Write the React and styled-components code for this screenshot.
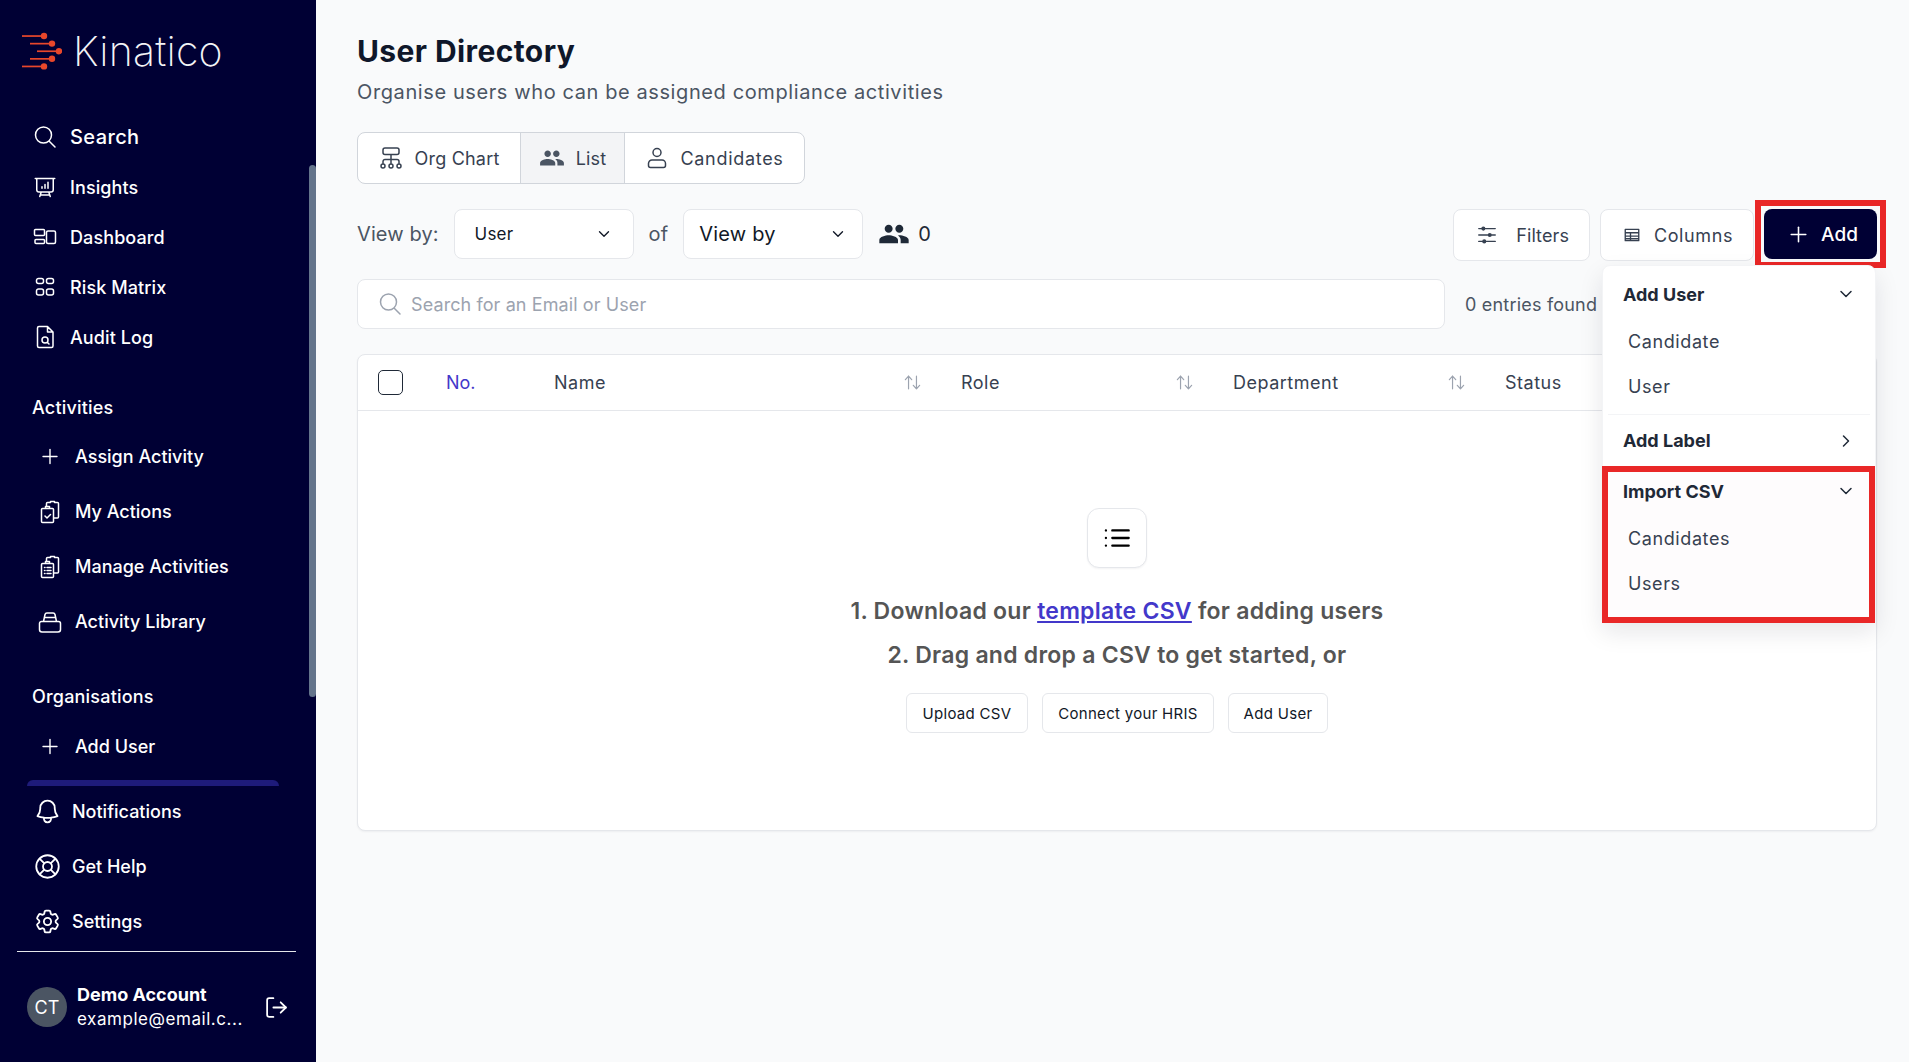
import React from 'react';
import styled, { createGlobalStyle } from 'styled-components';
import { HiOutlinePresentationChartBar, HiOutlineBell, HiOutlineCog6Tooth } from 'react-icons/hi2';
import { MdPeople } from 'react-icons/md';
import { ChevronDown, ChevronRight, LifeBuoy, LogOut, Plus } from 'lucide-react';

const GlobalStyle = createGlobalStyle`
  html, body {
    margin: 0;
    padding: 0;
    height: 100%;
    background: #f9fafb;
    font-family: Inter, "Open Sans", sans-serif;
  }
  * {
    box-sizing: border-box;
  }
`;

const Page = styled.div`
  display: flex;
  width: 100%;
  height: 100vh;
  overflow: hidden;
`;

const Sidebar = styled.aside`
  display: flex;
  flex-direction: column;
  flex: 0 0 316px;
  height: 100%;
  background: #000034;
  color: #fff;
`;

const LogoBar = styled.div`
  display: flex;
  align-items: center;
  gap: 11px;
  flex: 0 0 112px;
  padding: 0 0 11px 22px;
`;

const LogoText = styled.span`
  font-size: 41px;
  font-weight: 200;
  letter-spacing: 0.2px;
  color: #f3f4f6;
`;

const NavScroll = styled.nav`
  position: relative;
  flex: 1;
  overflow: hidden;
`;

const ScrollThumb = styled.div`
  position: absolute;
  top: 53px;
  right: 0;
  width: 7px;
  height: 532px;
  border-radius: 4px;
  background: #64748b;
`;

const TopRow = styled.div`
  display: flex;
  align-items: center;
  height: 50px;
  padding-left: 33px;
  gap: 13px;
  font-size: ${(p) => (p.$large ? '20px' : '18px')};
  font-weight: 500;
  letter-spacing: ${(p) => (p.$large ? '0.4px' : '0.1px')};
`;

const IconSlot = styled.span`
  display: flex;
  align-items: center;
  justify-content: center;
  flex: 0 0 ${(p) => p.$size || 24}px;
  min-width: 0;
  height: 24px;
`;

const SectionTitle = styled.div`
  display: flex;
  align-items: center;
  height: ${(p) => p.$height}px;
  margin-top: ${(p) => p.$top}px;
  padding-left: 32px;
  font-size: 18px;
  font-weight: 500;
  letter-spacing: 0.2px;
`;

const SubRow = styled.div`
  display: flex;
  align-items: center;
  height: 55px;
  padding-left: 38px;
  gap: 13px;
  font-size: 18px;
  font-weight: 500;
`;

const BottomNav = styled.div`
  display: flex;
  flex-direction: column;
  gap: 10px;
  padding-top: 3px;
`;

const ScrollEdge = styled.div`
  flex: 0 0 6px;
  margin: 0 37px 0 27px;
  border-radius: 8px 8px 0 0;
  background: #1e1b7a;
`;

const BottomRow = styled.div`
  display: flex;
  align-items: center;
  height: 45px;
  padding-left: 33px;
  gap: 10px;
  font-size: 18px;
  font-weight: 500;
`;

const Divider = styled.hr`
  flex: 0 0 1px;
  width: 279px;
  margin: 7px 0 0 17px;
  border: 0;
  background: #e5e7eb;
`;

const Account = styled.div`
  display: flex;
  align-items: center;
  flex: 0 0 110px;
  padding-left: 27px;
`;

const Avatar = styled.div`
  display: flex;
  align-items: center;
  justify-content: center;
  flex: 0 0 40px;
  height: 40px;
  border-radius: 50%;
  background: #4b5563;
  font-size: 18px;
`;

const AccountText = styled.div`
  display: flex;
  flex-direction: column;
  gap: 4px;
  width: 197px;
  padding-left: 10px;
  margin-top: -2px;
`;

const AccountName = styled.span`
  font-size: 18px;
  font-weight: 700;
`;

const AccountMail = styled.span`
  font-size: 17px;
  letter-spacing: 0.55px;
`;

const Main = styled.main`
  flex: 1;
  min-width: 0;
  padding: 31px 32px 0 41px;
`;

const Title = styled.h1`
  margin: 0;
  font-size: 30px;
  line-height: 40px;
  font-weight: 700;
  letter-spacing: 0.4px;
  color: #0f172a;
`;

const Subtitle = styled.p`
  margin: 7px 0 0;
  font-size: 20px;
  line-height: 28px;
  color: #4b5563;
  letter-spacing: 0.6px;
`;

const Tabs = styled.div`
  display: inline-flex;
  height: 52px;
  margin-top: 26px;
  border: 1px solid #d1d5db;
  border-radius: 8px;
  background: #fff;
  overflow: hidden;
`;

const Tab = styled.div`
  display: flex;
  align-items: center;
  justify-content: center;
  gap: ${(p) => p.$gap || 11}px;
  width: ${(p) => p.$width}px;
  font-size: 18px;
  letter-spacing: ${(p) => p.$spacing || 0.2}px;
  color: #374151;
  background: ${(p) => (p.$active ? '#f3f4f6' : 'transparent')};
  & + & {
    border-left: 1px solid #d1d5db;
  }
`;

const ToolRow = styled.div`
  display: flex;
  align-items: flex-start;
  margin-top: 25px;
`;

const ViewGroup = styled.div`
  display: flex;
  align-items: center;
  height: 50px;
  flex: 1;
`;

const ViewLabel = styled.span`
  font-size: 20px;
  letter-spacing: 0.1px;
  color: #4b5563;
  margin: ${(p) => p.$margin};
`;

const Select = styled.div`
  display: flex;
  align-items: center;
  justify-content: space-between;
  width: 180px;
  height: 50px;
  padding: 0 ${(p) => p.$right}px 0 ${(p) => p.$pad}px;
  border: 1px solid #e5e7eb;
  border-radius: 8px;
  background: #fff;
  color: #111827;
  font-size: ${(p) => p.$size}px;
  letter-spacing: 0.2px;
`;

const Count = styled.div`
  display: flex;
  align-items: center;
  gap: 8px;
  margin-left: 15px;
  font-size: 20px;
  color: #1f2937;
`;

const ToolButton = styled.div`
  display: flex;
  align-items: center;
  justify-content: flex-end;
  width: ${(p) => p.$width}px;
  height: 52px;
  margin-right: 10px;
  padding-right: 20px;
  gap: ${(p) => p.$gap}px;
  border: 1px solid #e5e7eb;
  border-radius: 8px;
  background: #fff;
  font-size: 18px;
  letter-spacing: ${(p) => p.$spacing}px;
  color: #374151;
`;

const AddWrap = styled.div`
  position: relative;
  width: 113px;
  height: 50px;
`;

const AddButton = styled.div`
  display: flex;
  align-items: center;
  justify-content: center;
  gap: 10px;
  height: 100%;
  padding-left: 3px;
  border-radius: 8px;
  background: #000034;
  color: #fff;
  font-size: 19px;
  font-weight: 500;
`;

const Highlight = styled.div`
  position: absolute;
  top: ${(p) => p.$inset[0]}px;
  right: ${(p) => p.$inset[1]}px;
  bottom: ${(p) => p.$inset[2]}px;
  left: ${(p) => p.$inset[3]}px;
  border: 6px solid #e92727;
  pointer-events: none;
`;

const Menu = styled.div`
  position: absolute;
  top: 56px;
  right: 1px;
  z-index: 5;
  width: 274px;
  height: 357px;
  padding-top: 3px;
  background: #fff;
  border: 1px solid #f3f4f6;
  border-radius: 8px 8px 0 0;
  box-shadow: 0 10px 24px rgba(15, 23, 42, 0.1);
`;

const MenuHead = styled.div`
  display: flex;
  align-items: center;
  justify-content: space-between;
  height: ${(p) => p.$height}px;
  padding: 0 19px 0 20px;
  font-size: 18px;
  font-weight: 700;
  color: #1f2937;
`;

const MenuItem = styled.div`
  display: flex;
  align-items: center;
  height: 45px;
  padding-left: 25px;
  font-size: 18px;
  letter-spacing: 0.6px;
  color: #374151;
`;

const MenuLine = styled.div`
  height: 1px;
  margin: 5px 5px 0;
  background: #f3f4f6;
`;

const ImportSection = styled.div`
  position: relative;
  height: 157px;
  background: #fefcfd;
`;

const SearchRow = styled.div`
  display: flex;
  align-items: center;
  margin-top: 18px;
`;

const SearchBox = styled.div`
  display: flex;
  align-items: center;
  flex: 1;
  height: 50px;
  padding-left: 20px;
  gap: 9px;
  border: 1px solid #e5e7eb;
  border-radius: 8px;
  background: #fff;
  font-size: 18px;
  letter-spacing: 0.1px;
  color: #9ca3af;
`;

const Entries = styled.div`
  flex: 0 0 432px;
  padding-left: 20px;
  font-size: 18px;
  letter-spacing: 0.2px;
  color: #4b5563;
`;

const Card = styled.section`
  margin-top: 25px;
  height: 477px;
  border: 1px solid #e5e7eb;
  border-radius: 8px;
  background: #fff;
  box-shadow: 0 1px 2px rgba(15, 23, 42, 0.05);
`;

const HeaderRow = styled.div`
  display: grid;
  grid-template-columns: 68px 108px 407px 272px 272px 1fr;
  align-items: center;
  height: 56px;
  padding-left: 20px;
  border-bottom: 1px solid #e5e7eb;
`;

const Checkbox = styled.div`
  width: 25px;
  height: 25px;
  border: 1.5px solid #1f2937;
  border-radius: 5px;
`;

const HeadCell = styled.div`
  display: flex;
  align-items: center;
  justify-content: space-between;
  padding-right: 39px;
  font-size: 18px;
  letter-spacing: ${(p) => (p.$accent ? 0 : 0.5)}px;
  color: ${(p) => (p.$accent ? '#4338ca' : '#374151')};
`;

const SortIcon = styled.span`
  display: flex;
  color: #9ca3af;
`;

const EmptyState = styled.div`
  display: flex;
  flex-direction: column;
  align-items: center;
  justify-content: center;
  height: 419px;
`;

const EmptyIcon = styled.div`
  display: flex;
  align-items: center;
  justify-content: center;
  width: 60px;
  height: 60px;
  margin-bottom: 27px;
  border: 1px solid #e5e7eb;
  border-radius: 12px;
  background: #fff;
  box-shadow: 0 1px 2px rgba(15, 23, 42, 0.05);
`;

const EmptyLine = styled.p`
  margin: 0 0 ${(p) => p.$bottom}px;
  font-size: 23px;
  line-height: 32px;
  font-weight: 600;
  letter-spacing: 0.25px;
  color: #555;
`;

const TemplateLink = styled.a`
  color: #4338ca;
  text-decoration: underline;
`;

const EmptyActions = styled.div`
  display: flex;
  gap: 14px;
`;

const GhostButton = styled.div`
  display: flex;
  align-items: center;
  justify-content: center;
  width: ${(p) => p.$width}px;
  height: 40px;
  border: 1px solid #e5e7eb;
  border-radius: 6px;
  background: #fff;
  font-size: 15px;
  letter-spacing: 0.3px;
  color: #111827;
`;

const Line = ({ d, size = 24, box = 24, width = 1.5 }) => (
  <svg width={size} height={size} viewBox={`0 0 ${box} ${box}`} fill="none" stroke="currentColor" strokeWidth={width} strokeLinecap="round" strokeLinejoin="round">
    <path d={d} />
  </svg>
);

const KinaticoMark = () => (
  <svg width="40" height="40" viewBox="0 0 40 40" fill="#e8472b">
    <rect x="0" y="4.2" width="22" height="1.7" />
    <circle cx="22" cy="5" r="3.2" />
    <rect x="8" y="11.8" width="22" height="1.7" />
    <circle cx="30" cy="12.6" r="3.2" />
    <rect x="15" y="19.4" width="22" height="1.7" />
    <circle cx="37" cy="20.2" r="3.2" />
    <rect x="8" y="27" width="22" height="1.7" />
    <circle cx="30" cy="27.8" r="3.2" />
    <rect x="0" y="34.6" width="22" height="1.7" />
    <circle cx="22" cy="35.4" r="3.2" />
  </svg>
);

const icons = {
  search: 'M10.5 2a8 8 0 1 0 0 16a8 8 0 0 0 0-16zM16.5 16.5L22 22',
  dashboard: 'M2.5 4.5h8a1 1 0 0 1 1 1v4a1 1 0 0 1-1 1h-8a1 1 0 0 1-1-1v-4a1 1 0 0 1 1-1zM3 14.5h7.5a1 1 0 0 1 1 1v2a1 1 0 0 1-1 1H3a1 1 0 0 1-1-1v-2a1 1 0 0 1 1-1zM15 6h6a1.5 1.5 0 0 1 1.5 1.5v9.500a1.500 1.500 0 0 1-1.500 1.500h-6a1.500 1.500 0 0 1-1.500-1.500v-9.500a1.500 1.500 0 0 1 1.500-1.500z',
  matrix: 'M5.500 3.500h3a2 2 0 0 1 2 2v1a2 2 0 0 1-2 2h-3a2 2 0 0 1-2-2v-1a2 2 0 0 1 2-2zM15.500 3.500h3a2 2 0 0 1 2 2v1a2 2 0 0 1-2 2h-3a2 2 0 0 1-2-2v-1a2 2 0 0 1 2-2zM5.500 14h3a2 2 0 0 1 2 2v2a2 2 0 0 1-2 2h-3a2 2 0 0 1-2-2v-2a2 2 0 0 1 2-2zM15.500 14h3a2 2 0 0 1 2 2v2a2 2 0 0 1-2 2h-3a2 2 0 0 1-2-2v-2a2 2 0 0 1 2-2z',
  audit: 'M6 1.500h8.500l5.500 5.500v14a1.500 1.500 0 0 1-1.500 1.500h-12.500a1.500 1.500 0 0 1-1.500-1.500v-18a1.500 1.500 0 0 1 1.500-1.500zM14.500 1.500v5.500h5.500M12 12a3 3 0 1 0 0 6a3 3 0 0 0 0-6zM14.200 17.200l1.800 1.800',
  actions: 'M4.500 8.500h10a1 1 0 0 1 1 1v12a1 1 0 0 1-1 1h-10a1 1 0 0 1-1-1v-12a1 1 0 0 1 1-1zM7.500 8.500v-2h4v2M8.500 6.500v-3a1 1 0 0 1 1-1h3v-1h4v1h3a1 1 0 0 1 1 1v13.500a1 1 0 0 1-1 1h-4M7 16l2 2l3.500-3.500',
  manage: 'M4.500 8.500h10a1 1 0 0 1 1 1v12a1 1 0 0 1-1 1h-10a1 1 0 0 1-1-1v-12a1 1 0 0 1 1-1zM7.500 8.500v-2h4v2M8.500 6.500v-3a1 1 0 0 1 1-1h3v-1h4v1h3a1 1 0 0 1 1 1v13.500a1 1 0 0 1-1 1h-4M6.500 12.500h.5M9 12.500h4M6.500 15.500h.5M9 15.500h4M6.500 18.500h.5M9 18.500h4',
  library: 'M3.500 11.500h17a2 2 0 0 1 2 2v6a2.500 2.500 0 0 1-2.500 2.500h-16a2.500 2.500 0 0 1-2.500-2.500v-6a2 2 0 0 1 2-2zM5.500 11.500l1.500-7a2 2 0 0 1 2-1.500h6a2 2 0 0 1 2 1.500l1.500 7M6.500 7.500h11',
  orgChart: 'M6 2h12a2 2 0 0 1 2 2v2.500a2 2 0 0 1-2 2h-12a2 2 0 0 1-2-2v-2.500a2 2 0 0 1 2-2zM12 8.500v9M4 18v-2.500a2 2 0 0 1 2-2h12a2 2 0 0 1 2 2v2.500M4 18a2 2 0 1 0 0 4a2 2 0 0 0 0-4zM12 18a2 2 0 1 0 0 4a2 2 0 0 0 0-4zM20 18a2 2 0 1 0 0 4a2 2 0 0 0 0-4z',
  person: 'M12 2.500a4 4 0 1 0 0 8a4 4 0 0 0 0-8zM7 14h10a3.500 3.500 0 0 1 3.500 3.500v2a2 2 0 0 1-2 2h-13a2 2 0 0 1-2-2v-2a3.500 3.500 0 0 1 3.500-3.500z',
  filters: 'M3 5h18M3 12h18M3 19h18M8 3.500a1.500 1.500 0 1 0 0 3a1.500 1.500 0 0 0 0-3zM15 10.500a1.500 1.500 0 1 0 0 3a1.500 1.500 0 0 0 0-3zM9 17.500a1.500 1.500 0 1 0 0 3a1.500 1.500 0 0 0 0-3z',
  columns: 'M3 4.500h18v15h-18zM3 9h18M3 13.500h18M3 17h18M10 9v10.500',
  sort: 'M7 20V4M7 4L3 8.500M7 4l4 4.500M17 4v16M17 20l-4-4.500M17 20l4-4.500',
  list: 'M8 5.500h14M8 12h14M8 18.500h14M2.500 5.500h.01M2.500 12h.01M2.500 18.500h.01',
};

const nav = [
  { label: 'Insights', icon: <HiOutlinePresentationChartBar size={25} /> },
  { label: 'Dashboard', icon: <Line d={icons.dashboard} /> },
  { label: 'Risk Matrix', icon: <Line d={icons.matrix} /> },
  { label: 'Audit Log', icon: <Line d={icons.audit} /> },
];

const activities = [
  { label: 'Assign Activity', icon: <Plus size={27} strokeWidth={1.4} /> },
  { label: 'My Actions', icon: <Line d={icons.actions} /> },
  { label: 'Manage Activities', icon: <Line d={icons.manage} /> },
  { label: 'Activity Library', icon: <Line d={icons.library} /> },
];

const bottom = [
  { label: 'Notifications', icon: <HiOutlineBell size={29} /> },
  { label: 'Get Help', icon: <LifeBuoy size={27} strokeWidth={1.6} /> },
  { label: 'Settings', icon: <HiOutlineCog6Tooth size={29} /> },
];

const columns = ['Name', 'Role', 'Department'];

const App = () => (
  <Page>
    <GlobalStyle />
    <Sidebar>
      <LogoBar>
        <KinaticoMark />
        <LogoText>Kinatico</LogoText>
      </LogoBar>
      <NavScroll>
        <TopRow $large>
          <IconSlot><Line d={icons.search} /></IconSlot>
          Search
        </TopRow>
        {nav.map((item) => (
          <TopRow key={item.label}>
            <IconSlot>{item.icon}</IconSlot>
            {item.label}
          </TopRow>
        ))}
        <SectionTitle $top={24} $height={43}>Activities</SectionTitle>
        {activities.map((item) => (
          <SubRow key={item.label}>
            <IconSlot>{item.icon}</IconSlot>
            {item.label}
          </SubRow>
        ))}
        <SectionTitle $top={25} $height={45}>Organisations</SectionTitle>
        <SubRow>
          <IconSlot><Plus size={27} strokeWidth={1.4} /></IconSlot>
          Add User
        </SubRow>
        <ScrollThumb />
      </NavScroll>
      <ScrollEdge />
      <BottomNav>
        {bottom.map((item) => (
          <BottomRow key={item.label}>
            <IconSlot $size={29}>{item.icon}</IconSlot>
            {item.label}
          </BottomRow>
        ))}
      </BottomNav>
      <Divider />
      <Account>
        <Avatar>CT</Avatar>
        <AccountText>
          <AccountName>Demo Account</AccountName>
          <AccountMail>example@email.c...</AccountMail>
        </AccountText>
        <LogOut size={25} strokeWidth={1.7} />
      </Account>
    </Sidebar>
    <Main>
      <Title>User Directory</Title>
      <Subtitle>Organise users who can be assigned compliance activities</Subtitle>
      <Tabs>
        <Tab $width={162} $gap={12}>
          <Line d={icons.orgChart} />
          Org Chart
        </Tab>
        <Tab $width={104} $active $spacing={0}>
          <MdPeople size={26} color="#4b5563" />
          List
        </Tab>
        <Tab $width={180} $spacing={0.7}>
          <Line d={icons.person} />
          Candidates
        </Tab>
      </Tabs>
      <ToolRow>
        <ViewGroup>
          <ViewLabel $margin="0 15px 0 0">View by:</ViewLabel>
          <Select $pad={20} $right={20} $size={17}>
            User
            <ChevronDown size={18} strokeWidth={1.8} />
          </Select>
          <ViewLabel $margin="0 15px">of</ViewLabel>
          <Select $pad={15} $right={15} $size={20}>
            View by
            <ChevronDown size={18} strokeWidth={1.8} />
          </Select>
          <Count>
            <MdPeople size={32} color="#1f2937" />
            0
          </Count>
        </ViewGroup>
        <ToolButton $width={137} $gap={18} $spacing={0.1}>
          <Line d={icons.filters} size={22} />
          Filters
        </ToolButton>
        <ToolButton $width={154} $gap={13} $spacing={0.6}>
          <Line d={icons.columns} size={18} width={1.8} />
          Columns
        </ToolButton>
        <AddWrap>
          <AddButton>
            <Plus size={25} strokeWidth={1.5} />
            Add
          </AddButton>
          <Highlight $inset={[-9, -9, -9, -9]} />
          <Menu>
            <MenuHead $height={50}>
              Add User
              <ChevronDown size={20} strokeWidth={1.8} />
            </MenuHead>
            <MenuItem>Candidate</MenuItem>
            <MenuItem>User</MenuItem>
            <MenuLine />
            <MenuHead $height={51}>
              Add Label
              <ChevronRight size={20} strokeWidth={1.8} />
            </MenuHead>
            <ImportSection>
              <MenuHead $height={50}>
                Import CSV
                <ChevronDown size={20} strokeWidth={1.8} />
              </MenuHead>
              <MenuItem>Candidates</MenuItem>
              <MenuItem>Users</MenuItem>
              <Highlight $inset={[0, 0, 0, -1]} />
            </ImportSection>
          </Menu>
        </AddWrap>
      </ToolRow>
      <SearchRow>
        <SearchBox>
          <Line d={icons.search} />
          Search for an Email or User
        </SearchBox>
        <Entries>0 entries found</Entries>
      </SearchRow>
      <Card>
        <HeaderRow>
          <Checkbox />
          <HeadCell $accent>No.</HeadCell>
          {columns.map((name) => (
            <HeadCell key={name}>
              {name}
              <SortIcon>
                <Line d={icons.sort} size={19} />
              </SortIcon>
            </HeadCell>
          ))}
          <HeadCell>Status</HeadCell>
        </HeaderRow>
        <EmptyState>
          <EmptyIcon>
            <Line d={icons.list} size={28} width={2} />
          </EmptyIcon>
          <EmptyLine $bottom={12}>
            1. Download our <TemplateLink>template CSV</TemplateLink> for adding users
          </EmptyLine>
          <EmptyLine $bottom={22}>2. Drag and drop a CSV to get started, or</EmptyLine>
          <EmptyActions>
            <GhostButton $width={122}>Upload CSV</GhostButton>
            <GhostButton $width={172}>Connect your HRIS</GhostButton>
            <GhostButton $width={100}>Add User</GhostButton>
          </EmptyActions>
        </EmptyState>
      </Card>
    </Main>
  </Page>
);

export default App;
